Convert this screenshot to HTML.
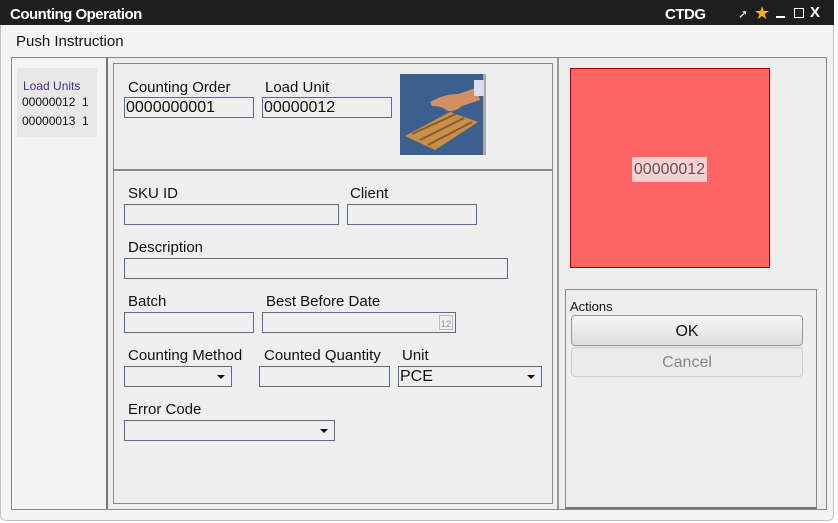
<!DOCTYPE html>
<html><head><style>
*{box-sizing:border-box;margin:0;padding:0}
body{width:838px;height:523px;background:#fff;font-family:"Liberation Sans",sans-serif;position:relative;overflow:hidden}
.a{position:absolute}
.win{left:0;top:0;width:834px;height:521px;border:1px solid #b8c4cc;border-radius:6px;background:#f4f4f4;overflow:hidden}
.tb{left:0;top:0;width:834px;height:25px;background:#1e1e1e}
.t{font-size:15px;color:#fff;font-weight:bold;letter-spacing:-0.5px}
.lb{font-size:15px;color:#111}
.in{border:1px solid #5b6b8c;height:21px;background:#eee;font-size:16px;color:#111;line-height:19px;padding-left:1px}
.arr{position:absolute;right:6px;top:8px;width:0;height:0;border-left:4px solid transparent;border-right:4px solid transparent;border-top:4px solid #111}
</style></head><body>
<div class="a win"></div>
<div class="a tb"></div>
<div class="a t" style="left:10px;top:6px">Counting Operation</div>
<div class="a t" style="left:665px;top:6px">CTDG</div>
<div class="a" style="left:738px;top:7px;color:#fff;font-size:12px">&#10138;</div>
<div class="a" style="left:754px;top:3px;color:#f5b400;font-size:18px">&#9733;</div>
<div class="a" style="left:776px;top:16px;width:9px;height:2px;background:#fff"></div>
<div class="a" style="left:794px;top:8px;width:10px;height:10px;border:1.5px solid #fff"></div>
<div class="a" style="left:810px;top:4px;color:#fff;font-size:15px;font-weight:bold">X</div>
<div class="a lb" style="left:16px;top:33px">Push Instruction</div>

<div class="a" style="left:11px;top:57px;width:816px;height:453px;border:1px solid #888;background:#f4f4f4"></div>
<div class="a" style="left:106px;top:58px;width:2px;height:451px;background:#777"></div>
<div class="a" style="left:108px;top:58px;width:449px;height:451px;background:#eee"></div>
<div class="a" style="left:557px;top:58px;width:2px;height:451px;background:#999"></div>
<div class="a" style="left:559px;top:58px;width:267px;height:451px;background:#eee"></div>

<div class="a" style="left:17px;top:68px;width:80px;height:69px;background:#e8e8e8"></div>
<div class="a" style="left:23px;top:79px;font-size:12px;color:#4a2a8a">Load Units</div>
<div class="a" style="left:22px;top:95px;font-size:12px;color:#111">00000012&nbsp;&nbsp;1</div>
<div class="a" style="left:22px;top:114px;font-size:12px;color:#111">00000013&nbsp;&nbsp;1</div>

<div class="a" style="left:113px;top:63px;width:440px;height:108px;border:1px solid #888;border-bottom:2px solid #888"></div>
<div class="a" style="left:113px;top:170px;width:440px;height:334px;border:1px solid #888"></div>

<div class="a lb" style="left:128px;top:79px">Counting Order</div>
<div class="a lb" style="left:265px;top:79px">Load Unit</div>
<div class="a in" style="left:124px;top:97px;width:130px">0000000001</div>
<div class="a in" style="left:262px;top:97px;width:130px">00000012</div>
<svg class="a" style="left:400px;top:74px" width="86" height="81" viewBox="0 0 86 81">
<rect width="86" height="81" fill="#3d5f8e"/><rect x="83" width="3" height="81" fill="#aaa"/>
<path d="M30 28 Q44 20 58 20 L76 14 L80 26 L62 32 Q52 40 46 36 Q42 32 32 32 Z" fill="#d09060"/>
<rect x="74" y="6" width="10" height="16" fill="#dde"/>
<path d="M5 62 L50 38 L78 48 L35 76 Z" fill="#c8904a"/>
<path d="M12 60 L56 40 M20 66 L64 44 M28 71 L72 48" stroke="#8a5a2a" stroke-width="2"/>
</svg>

<div class="a lb" style="left:128px;top:185px">SKU ID</div>
<div class="a lb" style="left:350px;top:185px">Client</div>
<div class="a in" style="left:124px;top:204px;width:215px"></div>
<div class="a in" style="left:347px;top:204px;width:130px"></div>
<div class="a lb" style="left:128px;top:239px">Description</div>
<div class="a in" style="left:124px;top:258px;width:384px"></div>
<div class="a lb" style="left:128px;top:293px">Batch</div>
<div class="a lb" style="left:266px;top:293px">Best Before Date</div>
<div class="a in" style="left:124px;top:312px;width:130px"></div>
<div class="a in" style="left:262px;top:312px;width:194px"><div class="a" style="right:2px;top:2px;width:14px;height:15px;border:1px solid #bbb;font-size:9px;color:#999;text-align:center;line-height:17px">12</div></div>
<div class="a lb" style="left:128px;top:347px">Counting Method</div>
<div class="a lb" style="left:264px;top:347px">Counted Quantity</div>
<div class="a lb" style="left:402px;top:347px">Unit</div>
<div class="a in" style="left:124px;top:366px;width:108px"><span class="arr"></span></div>
<div class="a in" style="left:259px;top:366px;width:131px"></div>
<div class="a in" style="left:398px;top:366px;width:144px">PCE<span class="arr"></span></div>
<div class="a lb" style="left:128px;top:401px">Error Code</div>
<div class="a in" style="left:124px;top:420px;width:211px"><span class="arr"></span></div>

<div class="a" style="left:570px;top:68px;width:200px;height:200px;background:#ff6464;border:1px solid #a00000"></div>
<div class="a" style="left:632px;top:157px;width:75px;height:25px;background:#ffd0d0;color:#555;font-size:16px;line-height:25px;text-align:center">00000012</div>

<div class="a" style="left:565px;top:289px;width:252px;height:220px;border:1px solid #888;border-bottom:2px solid #777;background:#eee"></div>
<div class="a" style="left:570px;top:299px;font-size:13px;color:#111">Actions</div>
<div class="a" style="left:571px;top:315px;width:232px;height:31px;border:1px solid #999;border-radius:4px;background:linear-gradient(#f6f6f6,#dedede);text-align:center;font-size:16px;line-height:32px;color:#111">OK</div>
<div class="a" style="left:571px;top:347px;width:232px;height:30px;border:1px solid #ccc;border-radius:4px;background:#ebebeb;text-align:center;font-size:16px;line-height:30px;color:#888">Cancel</div>
</body></html>
